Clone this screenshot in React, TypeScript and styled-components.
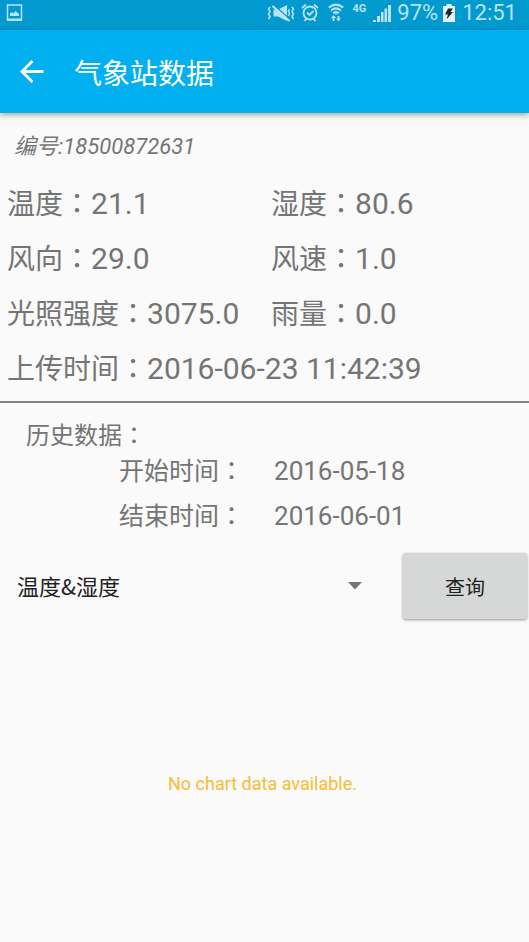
import React from "react";
import styled, { createGlobalStyle } from "styled-components";

const GlobalStyle = createGlobalStyle`
  * { box-sizing: border-box; }
  body {
    margin: 0;
    background: #fafafa;
    color: #757575;
    font-family: Roboto, "Noto Sans CJK SC", sans-serif;
  }
  button, select { font: inherit; color: inherit; border: 0; background: none; padding: 0; margin: 0; }
  h1, h2, p, dl, dd { margin: 0; font-weight: 400; }
`;

const Screen = styled.div`
  display: flex;
  flex-direction: column;
  min-height: 100vh;
`;

const StatusBar = styled.div`
  display: flex;
  align-items: center;
  justify-content: space-between;
  height: 30px;
  padding: 0 12px 5px 6px;
  background: #0299cf;
  color: #b9e3f3;
  font-size: 22px;
  line-height: 24px;
`;

const StatusGroup = styled.div`
  display: flex;
  align-items: center;
`;

const StatusIcon = styled.svg<{ $gap?: number }>`
  display: block;
  flex: none;
  margin-right: ${(p) => p.$gap ?? 0}px;
`;

const Network = styled.span`
  align-self: flex-start;
  margin: 2px 7px 0 0;
  font-size: 11px;
  font-weight: 700;
  line-height: 12px;
`;

const Percent = styled.span`
  margin-right: 5px;
`;

const AppBar = styled.header`
  display: flex;
  align-items: center;
  gap: 28px;
  height: 83px;
  padding: 0 18px;
  background: #03b0ef;
  color: #fff;
  box-shadow: 0 2px 6px rgba(0, 0, 0, 0.35);
`;

const BackButton = styled.button`
  display: flex;
  cursor: pointer;
`;

const Title = styled.h1`
  font-family: "Noto Sans CJK SC", sans-serif;
  font-size: 28px;
  line-height: 40px;
`;

const StationId = styled.p`
  padding: 18px 14px 14px;
  font-size: 22px;
  line-height: 32px;
  font-style: italic;
`;

const Readings = styled.dl`
  display: grid;
  grid-template-columns: 1fr 1fr;
  column-gap: 6px;
  padding: 0 0 4px 7px;
  border-bottom: 2px solid #858585;
  font-size: 28px;
  line-height: 40px;
`;

const Reading = styled.div<{ $wide?: boolean }>`
  display: flex;
  align-items: baseline;
  padding-top: 5px;
  height: 55px;
  white-space: nowrap;
  grid-column: ${(p) => (p.$wide ? "1 / -1" : "auto")};
`;

const ReadingValue = styled.dd`
  font-size: 30px;
`;

const ColonMark = styled.span`
  font-family: "Noto Sans CJK TC", sans-serif;
`;

const History = styled.section`
  padding-top: 19px;
`;

const HistoryTitle = styled.h2`
  padding-left: 26px;
  font-size: 24px;
  line-height: 24px;
`;

const DateRow = styled.div`
  display: flex;
  align-items: center;
  gap: 30px;
  height: 45px;
  padding-left: 119px;
`;

const DateLabel = styled.span`
  font-size: 25px;
  line-height: 36px;
`;

const DateButton = styled.button`
  font-size: 26px;
  line-height: 36px;
  cursor: pointer;
`;

const QueryRow = styled.form`
  display: flex;
  align-items: stretch;
  gap: 24px;
  height: 66px;
  margin-top: 15px;
  padding-right: 2px;
`;

const Picker = styled.div`
  display: grid;
  flex: 1;
  align-items: center;
  color: #212121;
`;

const Select = styled.select`
  grid-area: 1 / 1;
  width: 100%;
  height: 100%;
  padding: 0 40px 2px 17px;
  appearance: none;
  font-family: "Noto Sans CJK SC", sans-serif;
  font-size: 22px;
`;

const Caret = styled.svg`
  grid-area: 1 / 1;
  justify-self: end;
  margin-right: 16px;
  pointer-events: none;
`;

const QueryButton = styled.button`
  width: 124px;
  border-radius: 3px;
  background: #d6d7d7;
  color: #212121;
  font-size: 20px;
  box-shadow: 0 1px 3px rgba(0, 0, 0, 0.4);
  cursor: pointer;
`;

const Chart = styled.section`
  display: flex;
  flex: 1;
  align-items: center;
  justify-content: center;
  padding: 6px 4px 0 0;
  color: #f7bd33;
  font-size: 18px;
`;

const Colon = () => <ColonMark>：</ColonMark>;

const readings = [
  { label: "温度", value: "21.1" },
  { label: "湿度", value: "80.6" },
  { label: "风向", value: "29.0" },
  { label: "风速", value: "1.0" },
  { label: "光照强度", value: "3075.0" },
  { label: "雨量", value: "0.0" },
  { label: "上传时间", value: "2016-06-23 11:42:39", wide: true },
];

const dates = [
  { id: "start", label: "开始时间", value: "2016-05-18" },
  { id: "end", label: "结束时间", value: "2016-06-01" },
];

const PictureIcon = () => (
  <StatusIcon width="17" height="18" viewBox="0 0 17 18" aria-hidden="true">
    <path fill="none" stroke="currentColor" strokeWidth="1.5" d="M1.5 1h14v15h-14z" />
    <path fill="currentColor" d="M1 14.5h15V17H1zM4 12V9.5L6 8l1.5 1.5L9.500 7 13 10v2z" />
  </StatusIcon>
);

const MuteIcon = () => (
  <StatusIcon $gap={6} width="28" height="18" viewBox="0 0 28 18" aria-hidden="true">
    <path fill="currentColor" d="M6.500 5.500H11L20 1v16l-9-4.500H6.500z" />
    <path stroke="#0299cf" strokeWidth="1.500" d="M7.500 1.500l15 13.500" />
    <path stroke="currentColor" strokeWidth="2.200" d="M5.500 2l17 15" />
    <path
      fill="none"
      stroke="currentColor"
      strokeWidth="1.500"
      d="M3 3L1.500 5 3 7.500 1.500 10 3 12.500 1.500 15M25 3l1.500 2L25 7.500l1.500 2.500-1.500 2.500 1.500 2.500M22.500 5L21.500 7l1 2.500-1 2.500"
    />
  </StatusIcon>
);

const AlarmIcon = () => (
  <StatusIcon $gap={9} width="18" height="19" viewBox="0 0 18 19" aria-hidden="true">
    <g fill="none" stroke="currentColor" strokeWidth="1.800">
      <circle cx="9" cy="10" r="6.500" />
      <path d="M1 5l4-3.500M17 5l-4-3.500M3.500 18l2-2.500M14.500 18l-2-2.500M6 9.500l2.500 2.500L12.500 8" />
    </g>
  </StatusIcon>
);

const WifiIcon = () => (
  <StatusIcon $gap={9} width="16" height="19" viewBox="0 0 16 19" aria-hidden="true">
    <g fill="none" stroke="currentColor" strokeWidth="2">
      <path d="M.8 4.500Q8-1.300 15.200 4.500M3 7.500Q8 3.300 13 7.500M5.200 10.300Q8 8 10.800 10.300" />
      <path strokeWidth="1.800" d="M5.500 18v-4M10.500 13v4" />
    </g>
    <path fill="currentColor" d="M3 15l2.500-3L8 15zM8 15.500l2.500 3 2.500-3zM6.800 10.500h2.400L8 12z" />
  </StatusIcon>
);

const SignalIcon = () => (
  <StatusIcon $gap={6} width="18" height="18" viewBox="0 0 18 18" aria-hidden="true">
    <path fill="currentColor" d="M0 16h3v2H0zM4 12h3v6H4zM8 8h2.500v10H8zM11.500 4.500H14V18h-2.500zM15 1h3v17h-3z" />
  </StatusIcon>
);

const BatteryIcon = () => (
  <StatusIcon $gap={7} width="12" height="18" viewBox="0 0 12 18" aria-hidden="true">
    <path fill="#e3f4fa" d="M3.500 0h5v2H12v16H0V2h3.500z" />
    <path fill="#1c2a30" d="M5 4.500h5L7.500 8H10l-6.500 7.500L5 10.500H2z" />
  </StatusIcon>
);

export default function App() {
  return (
    <Screen>
      <GlobalStyle />
      <StatusBar>
        <PictureIcon />
        <StatusGroup>
          <MuteIcon />
          <AlarmIcon />
          <WifiIcon />
          <Network>4G</Network>
          <SignalIcon />
          <Percent>97%</Percent>
          <BatteryIcon />
          <span>12:51</span>
        </StatusGroup>
      </StatusBar>
      <AppBar>
        <BackButton type="button" aria-label="返回">
          <svg width="28" height="28" viewBox="0 0 28 28" aria-hidden="true">
            <path fill="none" stroke="#fff" strokeWidth="2.800" d="M25.500 13.500H4M14.500 3L4 13.500 14.500 24" />
          </svg>
        </BackButton>
        <Title>气象站数据</Title>
      </AppBar>
      <main>
        <StationId>编号:18500872631</StationId>
        <Readings>
          {readings.map((r) => (
            <Reading key={r.label} $wide={r.wide}>
              <dt>
                {r.label}
                <Colon />
              </dt>
              <ReadingValue>{r.value}</ReadingValue>
            </Reading>
          ))}
        </Readings>
        <History>
          <HistoryTitle>
            历史数据
            <Colon />
          </HistoryTitle>
          {dates.map((d) => (
            <DateRow key={d.id}>
              <DateLabel id={d.id}>
                {d.label}
                <Colon />
              </DateLabel>
              <DateButton type="button" aria-describedby={d.id}>
                {d.value}
              </DateButton>
            </DateRow>
          ))}
        </History>
        <QueryRow onSubmit={(e) => e.preventDefault()}>
          <Picker>
            <Select aria-label="数据类型">
              <option>温度&amp;湿度</option>
            </Select>
            <Caret width="16" height="8" viewBox="0 0 16 8" aria-hidden="true">
              <path fill="#757575" d="M1 0h14L8 7.500z" />
            </Caret>
          </Picker>
          <QueryButton type="submit">查询</QueryButton>
        </QueryRow>
      </main>
      <Chart>
        <p>No chart data available.</p>
      </Chart>
    </Screen>
  );
}
